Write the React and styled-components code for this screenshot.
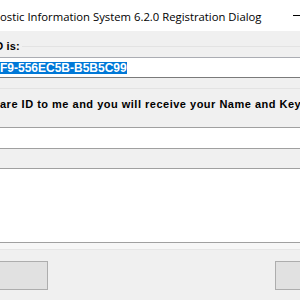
import React from "react";
import styled, { createGlobalStyle } from "styled-components";

const GlobalStyle = createGlobalStyle`
  html, body {
    margin: 0;
    padding: 0;
    background: #f0f0f0;
    overflow: hidden;
  }
`;

function App() {
  return (
    <>
      <GlobalStyle />
      <Dialog>
        <TitleBar>
          <Title>ostic Information System 6.2.0 Registration Dialog</Title>
          <Minimize>
            <span />
          </Minimize>
        </TitleBar>
        <Body>
          <LabelRow>
            <Label $shift={-8} $spacing={0.15}>ID is:</Label>
            <Etch />
          </LabelRow>
          <IdField>
            <Selected>F9-556EC5B-B5B5C99</Selected>
          </IdField>
          <Divider />
          <Label $shift={0} $spacing={0.5}>
            are ID to me and you will receive your Name and Key
          </Label>
          <Fields>
            <Field $h={20} $bg="#ffffff" />
            <Field $h={19} $bg="#f0f0f0" />
            <Field $h={73} $bg="#ffffff" />
          </Fields>
        </Body>
        <ButtonBar>
          <Button $side="left" />
          <Button $side="right" />
        </ButtonBar>
      </Dialog>
    </>
  );
}

export default App;

const Dialog = styled.div`
  width: 300px;
  height: 300px;
  display: flex;
  flex-direction: column;
  background: #f0f0f0;
  overflow: hidden;
`;

const TitleBar = styled.div`
  height: 31px;
  flex: none;
  display: flex;
  align-items: center;
  justify-content: space-between;
  background: #ffffff;
`;

const Title = styled.span`
  font-family: "Open Sans", "Noto Sans", sans-serif;
  font-size: 11.3px;
  color: #000;
  white-space: nowrap;
  margin-top: 1px;
`;

const Minimize = styled.div`
  width: 7px;
  display: flex;
  justify-content: flex-end;

  span {
    width: 7px;
    height: 1px;
    background: #000;
  }
`;

const Body = styled.div`
  flex: none;
  display: flex;
  flex-direction: column;
  padding-top: 9px;
`;

const LabelRow = styled.div`
  display: flex;
  align-items: center;
  gap: 2px;
`;

const Label = styled.div`
  font-family: "Liberation Sans", Arial, sans-serif;
  font-weight: bold;
  font-size: 11px;
  line-height: 13px;
  color: #000;
  white-space: nowrap;
  margin-left: ${(p) => p.$shift}px;
  letter-spacing: ${(p) => p.$spacing}px;
`;

const Etch = styled.div`
  flex: 1;
  height: 1px;
  background: #e3e3e3;
`;

const IdField = styled.div`
  margin-top: 4px;
  margin-left: -2px;
  margin-right: -4px;
  height: 19px;
  display: flex;
  align-items: center;
  padding-left: 2px;
  background: #ffffff;
  border-top: 1px solid #abadb3;
  border-bottom: 1px solid #7a7a7a;
`;

const Selected = styled.span`
  font-family: "Liberation Sans", Arial, sans-serif;
  font-weight: bold;
  font-size: 12px;
  line-height: 12px;
  height: 12px;
  color: #ffffff;
  background: #0078d7;
  white-space: nowrap;
`;

const Divider = styled.div`
  height: 1px;
  margin-top: 10px;
  margin-bottom: 9px;
  background: #e3e3e3;
`;

const Fields = styled.div`
  margin-top: 16px;
  display: flex;
  flex-direction: column;
  border-top: 1px solid #a0a0a0;
`;

const Field = styled.div`
  height: ${(p) => p.$h}px;
  background: ${(p) => p.$bg};
  border-bottom: 1px solid #a0a0a0;
`;

const ButtonBar = styled.div`
  flex: 1;
  display: flex;
  justify-content: space-between;
  align-items: flex-start;
  padding-top: 12px;
  border-top: 6px solid #f7f7f7;
  box-shadow: inset 0 1px 0 #e6e6e6;
`;

const Button = styled.div`
  width: ${(p) => (p.$side === "left" ? 50 : 30)}px;
  height: 27px;
  background: #e1e1e1;
  border: 1px solid #adadad;
  margin-left: ${(p) => (p.$side === "left" ? -4 : 0)}px;
  margin-right: ${(p) => (p.$side === "right" ? -7 : 0)}px;
`;
